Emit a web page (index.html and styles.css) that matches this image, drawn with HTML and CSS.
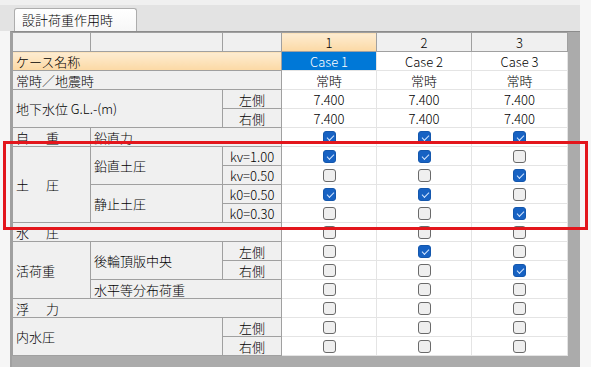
FILE: index.html
```html
<!DOCTYPE html>
<html lang="ja">
<head>
  <meta charset="UTF-8">
  <title>設計荷重作用時</title>
  <link rel="stylesheet" href="styles.css">
</head>
<body>

<div class="top"></div>
<div class="tabstrip">
  <div class="tab">設計荷重作用時</div>
</div>

<!-- Load case grid -->
<div class="panel">
  <table class="grid">
    <colgroup>
      <col style="width:78px"><col style="width:132px"><col style="width:59px">
      <col style="width:95px"><col style="width:95px"><col style="width:96px">
    </colgroup>
    <tr>
      <th></th><th></th><th></th>
      <th class="cur">1</th><th>2</th><th>3</th>
    </tr>
    <tr>
      <td colspan="3" class="name">ケース名称</td>
      <td class="v sel">Case 1</td><td class="v">Case 2</td><td class="v">Case 3</td>
    </tr>
    <tr>
      <td colspan="3">常時／地震時</td>
      <td class="v">常時</td><td class="v">常時</td><td class="v">常時</td>
    </tr>
    <tr>
      <td colspan="2" rowspan="2">地下水位 G.L.-(m)</td><td class="c">左側</td>
      <td class="v">7.400</td><td class="v">7.400</td><td class="v">7.400</td>
    </tr>
    <tr>
      <td class="c">右側</td>
      <td class="v">7.400</td><td class="v">7.400</td><td class="v">7.400</td>
    </tr>
    <tr>
      <td class="sp">自　重</td><td colspan="2">鉛直力</td>
      <td class="v"><span class="cb on"></span></td><td class="v"><span class="cb on"></span></td><td class="v"><span class="cb on"></span></td>
    </tr>
    <tr>
      <td rowspan="4" class="sp">土　圧</td><td rowspan="2">鉛直土圧</td><td class="c">kv=1.00</td>
      <td class="v"><span class="cb on"></span></td><td class="v"><span class="cb on"></span></td><td class="v"><span class="cb"></span></td>
    </tr>
    <tr>
      <td class="c">kv=0.50</td>
      <td class="v"><span class="cb"></span></td><td class="v"><span class="cb"></span></td><td class="v"><span class="cb on"></span></td>
    </tr>
    <tr>
      <td rowspan="2">静止土圧</td><td class="c">k0=0.50</td>
      <td class="v"><span class="cb on"></span></td><td class="v"><span class="cb on"></span></td><td class="v"><span class="cb"></span></td>
    </tr>
    <tr>
      <td class="c">k0=0.30</td>
      <td class="v"><span class="cb"></span></td><td class="v"><span class="cb"></span></td><td class="v"><span class="cb on"></span></td>
    </tr>
    <tr>
      <td colspan="3" class="sp">水　圧</td>
      <td class="v"><span class="cb"></span></td><td class="v"><span class="cb"></span></td><td class="v"><span class="cb"></span></td>
    </tr>
    <tr>
      <td rowspan="3">活荷重</td><td rowspan="2">後輪頂版中央</td><td class="c">左側</td>
      <td class="v"><span class="cb"></span></td><td class="v"><span class="cb on"></span></td><td class="v"><span class="cb"></span></td>
    </tr>
    <tr>
      <td class="c">右側</td>
      <td class="v"><span class="cb"></span></td><td class="v"><span class="cb"></span></td><td class="v"><span class="cb on"></span></td>
    </tr>
    <tr>
      <td colspan="2">水平等分布荷重</td>
      <td class="v"><span class="cb"></span></td><td class="v"><span class="cb"></span></td><td class="v"><span class="cb"></span></td>
    </tr>
    <tr>
      <td colspan="3" class="sp">浮　力</td>
      <td class="v"><span class="cb"></span></td><td class="v"><span class="cb"></span></td><td class="v"><span class="cb"></span></td>
    </tr>
    <tr>
      <td colspan="2" rowspan="2">内水圧</td><td class="c">左側</td>
      <td class="v"><span class="cb"></span></td><td class="v"><span class="cb"></span></td><td class="v"><span class="cb"></span></td>
    </tr>
    <tr>
      <td class="c">右側</td>
      <td class="v"><span class="cb"></span></td><td class="v"><span class="cb"></span></td><td class="v"><span class="cb"></span></td>
    </tr>
  </table>
</div>

<!-- annotation frame -->
<div class="mark"></div>

</body>
</html>
```

FILE: styles.css
```css
* { margin: 0; padding: 0; box-sizing: border-box; }

body {
  width: 591px;
  height: 367px;
  overflow: hidden;
  position: relative;
  background: #f6f6f6;
  font-family: "Noto Sans CJK JP", "Noto Sans", sans-serif;
  font-size: 13px;
  font-weight: 300;
  color: #000;
}

.top {
  width: 580px;
  height: 5px;
  background: #f0f0f0;
}

.tabstrip {
  width: 580px;
  height: 26px;
  background: #e3e3e3;
  padding-left: 14px;
  display: flex;
  align-items: flex-end;
}

.tab {
  width: 123px;
  height: 23px;
  border: 1px solid #adadad;
  border-bottom: none;
  border-radius: 3px 3px 0 0;
  background: linear-gradient(#ffffff, #f7f7f7);
  padding-left: 7px;
  line-height: 21px;
}

.panel {
  width: 570px;
  height: 336px;
  margin-left: 10px;
  border-top: 1px solid #8c8c8c;
  border-left: 2px solid #a0a0a0;
  background: #ababab;
}

.grid {
  border-collapse: collapse;
  table-layout: fixed;
  width: 555px;
}

.grid tr { height: 19px; }

.grid th,
.grid td {
  border: 1px solid #a0a0a0;
  background: #f0f0f0;
  padding: 0 0 0 3px;
  white-space: nowrap;
  line-height: 17px;
  font-weight: 300;
  text-align: left;
}

.grid th { text-align: center; padding: 0; }

.grid th.cur,
.grid td.name {
  background: linear-gradient(#fdecd2, #fcd9a4);
}

.grid td.c { text-align: center; padding: 0; }

.grid td.sp { letter-spacing: 2px; }

.grid td.v {
  background: #fff;
  border-color: #e4e4e4;
  text-align: center;
  padding: 0;
}

.grid td.sel {
  background: #0078d7;
  color: #fff;
}

.cb {
  display: block;
  width: 13px;
  height: 13px;
  margin: 0 auto;
  border: 1px solid #6a6a6a;
  border-radius: 3px;
  background: #efefef;
  position: relative;
}

.cb.on {
  background: #1762c3;
  border-color: #1457ad;
}

.cb.on::after {
  content: "";
  position: absolute;
  left: 3px;
  top: 3px;
  width: 6px;
  height: 3px;
  border-left: 1.5px solid #d4e6ff;
  border-bottom: 1.5px solid #d4e6ff;
  transform: rotate(-45deg);
}

.mark {
  position: absolute;
  left: 3px;
  top: 141px;
  width: 585px;
  height: 89px;
  border: 3px solid #e3161c;
  pointer-events: none;
}
```
